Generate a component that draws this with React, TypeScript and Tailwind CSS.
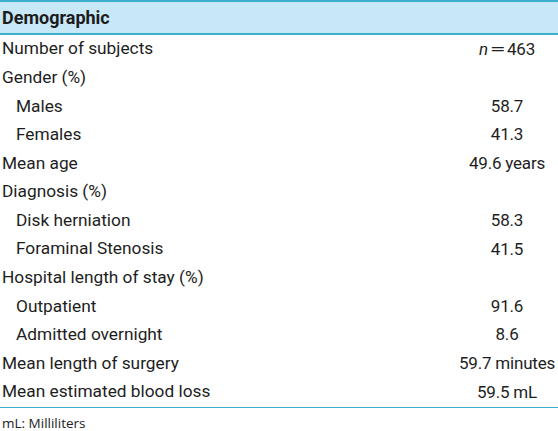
import React from "react";

type Row = { label: React.ReactNode; value: React.ReactNode; indent?: boolean };

const rows: Row[] = [
  {
    label: "Number of subjects",
    value: (
      <span className="inline-flex items-baseline">
        <span className="italic">n</span>
        <span className="inline-block mx-[2px] scale-x-[1.7] px-[3px]">=</span>
        <span>463</span>
      </span>
    ),
  },
  { label: "Gender (%)", value: "" },
  { label: "Males", value: "58.7", indent: true },
  { label: "Females", value: "41.3", indent: true },
  { label: "Mean age", value: "49.6 years" },
  { label: "Diagnosis (%)", value: "" },
  { label: "Disk herniation", value: "58.3", indent: true },
  { label: "Foraminal Stenosis", value: "41.5", indent: true },
  { label: "Hospital length of stay (%)", value: "" },
  { label: "Outpatient", value: "91.6", indent: true },
  { label: "Admitted overnight", value: "8.6", indent: true },
  { label: "Mean length of surgery", value: "59.7 minutes" },
  { label: "Mean estimated blood loss", value: "59.5 mL" },
];

export default function App() {
  return (
    <div
      className="w-[558px] h-[431px] bg-white text-[#1e1e1e]"
      style={{ fontFamily: 'Roboto, "Liberation Sans", Arial, sans-serif' }}
    >
      <div className="h-[35px] border-t-2 border-b-2 border-[#3aaecb] bg-[#c8e8f8] flex items-center pl-[2px]">
        <span className="font-bold text-[18px] text-[#1c1c1c]">Demographic</span>
      </div>
      <div className="border-b border-[#3aaecb]">
        {rows.map((r, i) => (
          <div key={i} className="h-[28.6px] flex items-center">
            <div className={(r.indent ? "pl-[16px]" : "pl-[2px]") + " flex-1 text-[17.3px]"}>{r.label}</div>
            <div className="w-[102px] text-center whitespace-nowrap text-[17px] tracking-[-0.2px]">{r.value}</div>
          </div>
        ))}
      </div>
      <div
        className="pl-[2px] pt-[5px] text-[13.5px] text-[#222]"
        style={{ fontFamily: '"Open Sans", "Noto Sans", sans-serif' }}
      >
        mL: Milliliters
      </div>
    </div>
  );
}
